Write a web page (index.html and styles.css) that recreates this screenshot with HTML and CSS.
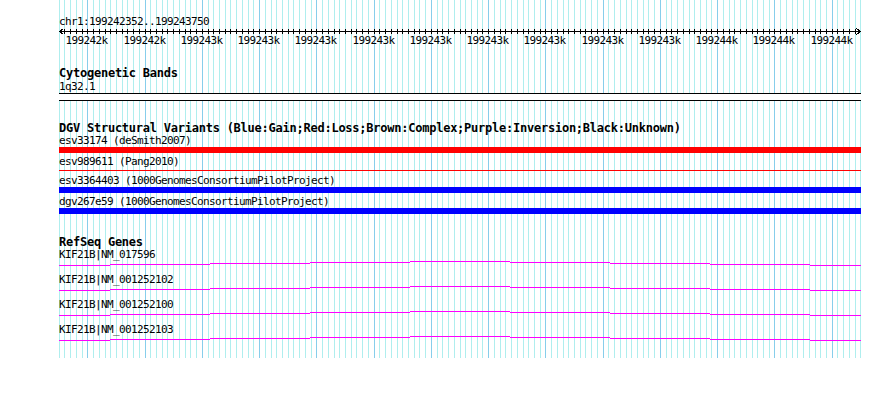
FILE: index.html
```html
<!DOCTYPE html>
<html>
<head>
<meta charset="utf-8">
<title>Genome browser</title>
<link rel="stylesheet" href="styles.css">
</head>
<body>
<div class="panel">
  <svg class="grid" id="grid" width="803" height="358" shape-rendering="crispEdges"></svg>

  <div class="ruler-track">
    <div class="seg-name">chr1:199242352..199243750</div>
    <div class="ruler">
      <svg class="ruler-svg" id="ruler" width="803" height="8" shape-rendering="crispEdges"></svg>
      <div class="ruler-labels" id="ruler-labels"></div>
    </div>
  </div>

  <section class="track cyto">
    <div class="track-title">Cytogenetic Bands</div>
    <div class="feat-label">1q32.1</div>
    <div class="band"></div>
  </section>

  <section class="track dgv">
    <div class="track-title">DGV Structural Variants (Blue:Gain;Red:Loss;Brown:Complex;Purple:Inversion;Black:Unknown)</div>
    <div class="variant">
      <div class="feat-label">esv33174 (deSmith2007)</div>
      <div class="bar bar-loss"></div>
    </div>
    <div class="variant">
      <div class="feat-label">esv989611 (Pang2010)</div>
      <div class="bar bar-loss bar-thin"></div>
    </div>
    <div class="variant">
      <div class="feat-label">esv3364403 (1000GenomesConsortiumPilotProject)</div>
      <div class="bar bar-gain"></div>
    </div>
    <div class="variant">
      <div class="feat-label">dgv267e59 (1000GenomesConsortiumPilotProject)</div>
      <div class="bar bar-gain"></div>
    </div>
  </section>

  <section class="track genes">
    <div class="track-title">RefSeq Genes</div>
    <div class="gene">
      <div class="feat-label">KIF21B|NM_017596</div>
      <svg class="intron" width="802" height="5" shape-rendering="crispEdges"><path d="M0 4h51v1h-51z M51 3h100v1h-100z M151 2h100v1h-100z M251 1h100v1h-100z M351 0h100v1h-100z M451 1h100v1h-100z M551 2h100v1h-100z M651 3h100v1h-100z M751 4h51v1h-51z"/></svg>
    </div>
    <div class="gene">
      <div class="feat-label">KIF21B|NM_001252102</div>
      <svg class="intron" width="802" height="5" shape-rendering="crispEdges"><path d="M0 4h51v1h-51z M51 3h100v1h-100z M151 2h100v1h-100z M251 1h100v1h-100z M351 0h100v1h-100z M451 1h100v1h-100z M551 2h100v1h-100z M651 3h100v1h-100z M751 4h51v1h-51z"/></svg>
    </div>
    <div class="gene">
      <div class="feat-label">KIF21B|NM_001252100</div>
      <svg class="intron" width="802" height="5" shape-rendering="crispEdges"><path d="M0 4h51v1h-51z M51 3h100v1h-100z M151 2h100v1h-100z M251 1h100v1h-100z M351 0h100v1h-100z M451 1h100v1h-100z M551 2h100v1h-100z M651 3h100v1h-100z M751 4h51v1h-51z"/></svg>
    </div>
    <div class="gene">
      <div class="feat-label">KIF21B|NM_001252103</div>
      <svg class="intron" width="802" height="5" shape-rendering="crispEdges"><path d="M0 4h51v1h-51z M51 3h100v1h-100z M151 2h100v1h-100z M251 1h100v1h-100z M351 0h100v1h-100z M451 1h100v1h-100z M551 2h100v1h-100z M651 3h100v1h-100z M751 4h51v1h-51z"/></svg>
    </div>
  </section>
</div>
<script src="script.js"></script>
</body>
</html>
```

FILE: styles.css
```css
html, body {
  margin: 0;
  padding: 0;
  background: #ffffff;
}

body {
  font-family: "DejaVu Sans Mono", "Liberation Mono", monospace;
  font-size: 11px;
  letter-spacing: -0.62px;
  line-height: 13px;
  color: #000000;
}

.panel {
  position: relative;
  isolation: isolate;
  margin-left: 59px;
  width: 803px;
  height: 358px;
  padding-top: 15px;
  box-sizing: border-box;
}

.grid {
  position: absolute;
  left: 0;
  top: 0;
  z-index: -1;
  display: block;
}

.seg-name,
.feat-label {
  height: 13px;
  white-space: nowrap;
}

.ruler {
  position: relative;
  height: 19px;
}

.ruler-svg {
  display: block;
}

.tick-label {
  position: absolute;
  top: 6px;
  width: 43px;
  text-align: center;
  white-space: nowrap;
}

.track-title {
  font-weight: bold;
  font-size: 12px;
  letter-spacing: -0.24px;
  line-height: 13px;
  height: 12px;
  padding-top: 1px;
  white-space: nowrap;
}

.cyto {
  margin-top: 19px;
}

.cyto .feat-label {
  margin-top: 1px;
}

.band {
  width: 802px;
  height: 6px;
  border-top: 1px solid #000000;
  border-bottom: 1px solid #000000;
  background: #ffffff;
}

.dgv {
  margin-top: 20px;
}

.variant {
  margin-bottom: 2px;
}

.variant:last-child {
  margin-bottom: 0;
}

.bar {
  width: 802px;
  height: 6px;
}

.bar-thin {
  height: 1px;
  margin: 2px 0 3px;
}

.bar-loss {
  background: #ff0000;
}

.bar-gain {
  background: #0000ff;
}

.genes {
  margin-top: 21px;
}

.gene {
  margin-bottom: 7px;
}

.intron {
  display: block;
  fill: #ff00ff;
}
```

FILE: script.js
```js
(function () {
  var START = 199242350, END = 199243750;
  function col(bp) {
    return Math.round((bp - START) * 0.5726 - 0.3);
  }

  var grid = document.getElementById('grid');
  var ruler = document.getElementById('ruler');
  var labels = document.getElementById('ruler-labels');

  var g = '';
  var r = '<rect x="0" y="3" width="802" height="1" fill="#000"/>';
  for (var bp = START; bp <= END; bp += 10) {
    var x = col(bp);
    var major = bp % 100 === 0;
    g += '<rect x="' + x + '" y="0" width="1" height="358" fill="' + (major ? '#87ceeb' : '#afeeee') + '"/>';
    if (bp > START && bp < END) {
      r += '<rect x="' + x + '" y="1" width="1" height="5" fill="#000"/>';
    }
  }
  r += '<path d="M0.5 3.5 L4.5 0.5 M0.5 3.5 L4.5 6.5 M801.5 3.5 L797.5 0.5 M801.5 3.5 L797.5 6.5" stroke="#000" stroke-width="1" fill="none"/>';
  grid.innerHTML = g;
  ruler.innerHTML = r;

  var texts = ['199242k', '199242k'];
  for (var i = 0; i < 9; i++) texts.push('199243k');
  for (var j = 0; j < 3; j++) texts.push('199244k');

  for (var k = 0; k < texts.length; k++) {
    var pos = col(199242400 + k * 100);
    var d = document.createElement('div');
    d.className = 'tick-label';
    d.style.left = (pos - 22) + 'px';
    d.textContent = texts[k];
    labels.appendChild(d);
  }
})();
```
